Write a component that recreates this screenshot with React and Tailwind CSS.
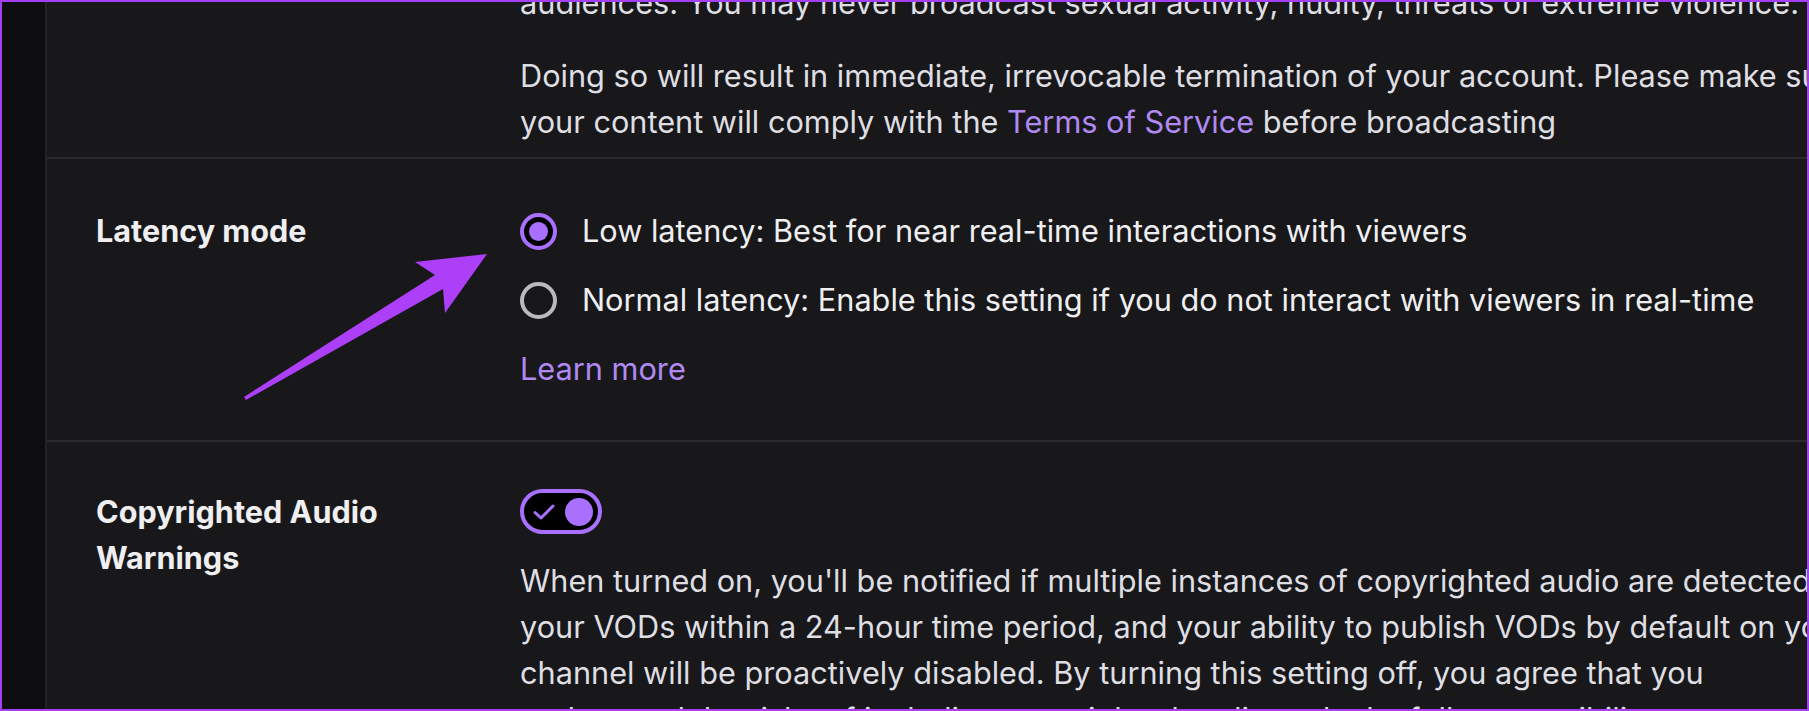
import React from 'react';

const Radio = ({ checked, children }) => (
  <div className="flex items-center h-[46px]">
    {checked ? (
      <div className="w-[37px] h-[37px] rounded-full border-[4px] border-[#a970ff] bg-black flex items-center justify-center shrink-0">
        <div className="w-[19px] h-[19px] rounded-full bg-[#a970ff]" />
      </div>
    ) : (
      <div className="w-[37px] h-[37px] rounded-full border-[4px] border-[#b9b9bf] shrink-0" />
    )}
    <span className="ml-[25px] text-[#efeff1] whitespace-nowrap">{children}</span>
  </div>
);

const Toggle = () => (
  <div className="w-[82px] h-[45px] rounded-full border-[4px] border-[#a970ff] bg-black flex items-center justify-between pl-[9px] pr-[5px]">
    <svg width="22" height="16" viewBox="0 0 22 16" fill="none">
      <path d="M2 8.5 L8 14 L20 2" stroke="#a970ff" strokeWidth="3" strokeLinecap="round" strokeLinejoin="round" />
    </svg>
    <div className="w-[28px] h-[28px] rounded-full bg-[#a970ff]" />
  </div>
);

const Row = ({ label, children, className = '' }) => (
  <div className={`flex pl-[49px] border-b-2 border-[#2a2a2e] ${className}`}>
    <div className="w-[424px] shrink-0 font-bold text-[#efeff1] text-[30.6px]">{label}</div>
    <div className="flex-1 min-w-0">{children}</div>
  </div>
);

export default function App() {
  return (
    <div
      className="w-[1809px] h-[711px] overflow-hidden border-2 border-[#a33ff5] flex bg-[#18181b] text-[30.7px] leading-[46px]"
      style={{ fontFamily: 'Inter, "Noto Sans", sans-serif' }}
    >
      <div className="w-[45px] shrink-0 bg-[#0e0e10] border-r-2 border-[#232327]" />
      <div className="relative flex-1 min-w-0 overflow-hidden">
        <Row label="" className="-mt-[22px] pb-[12px]">
          <div className="text-[#dedee3] whitespace-nowrap">
            <div>audiences. You may never broadcast sexual activity, nudity, threats or extreme violence.</div>
            <div className="mt-[27px]">
              Doing so will result in immediate, irrevocable termination of your account. Please make sure
            </div>
            <div>
              your content will comply with the <span className="text-[#b08af2]">Terms of Service</span> before broadcasting
            </div>
          </div>
        </Row>

        <Row label="Latency mode" className="pt-[49px] pb-[48px]">
          <div className="flex flex-col gap-[23px]">
            <Radio checked>Low latency: Best for near real-time interactions with viewers</Radio>
            <Radio>Normal latency: Enable this setting if you do not interact with viewers in real-time</Radio>
            <div className="text-[#b08af2]">Learn more</div>
          </div>
        </Row>

        <Row label={<>Copyrighted Audio<br />Warnings</>} className="pt-[47px] border-b-0">
          <div className="mb-[24px]">
            <Toggle />
          </div>
          <div className="text-[#dedee3] whitespace-nowrap">
            <div>When turned on, you'll be notified if multiple instances of copyrighted audio are detected in</div>
            <div>your VODs within a 24-hour time period, and your ability to publish VODs by default on your</div>
            <div>channel will be proactively disabled. By turning this setting off, you agree that you</div>
            <div>understand the risks of including copyrighted audio and take full responsibility</div>
          </div>
        </Row>

        {/* annotation arrow */}
        <svg className="absolute left-0 top-0 pointer-events-none" width="600" height="450" viewBox="47 0 600 450">
          <polygon
            points="244,395 246,398 443,287 445,311 487,252 415,260 435,273"
            fill="#ad3ff9"
          />
        </svg>
      </div>
    </div>
  );
}
